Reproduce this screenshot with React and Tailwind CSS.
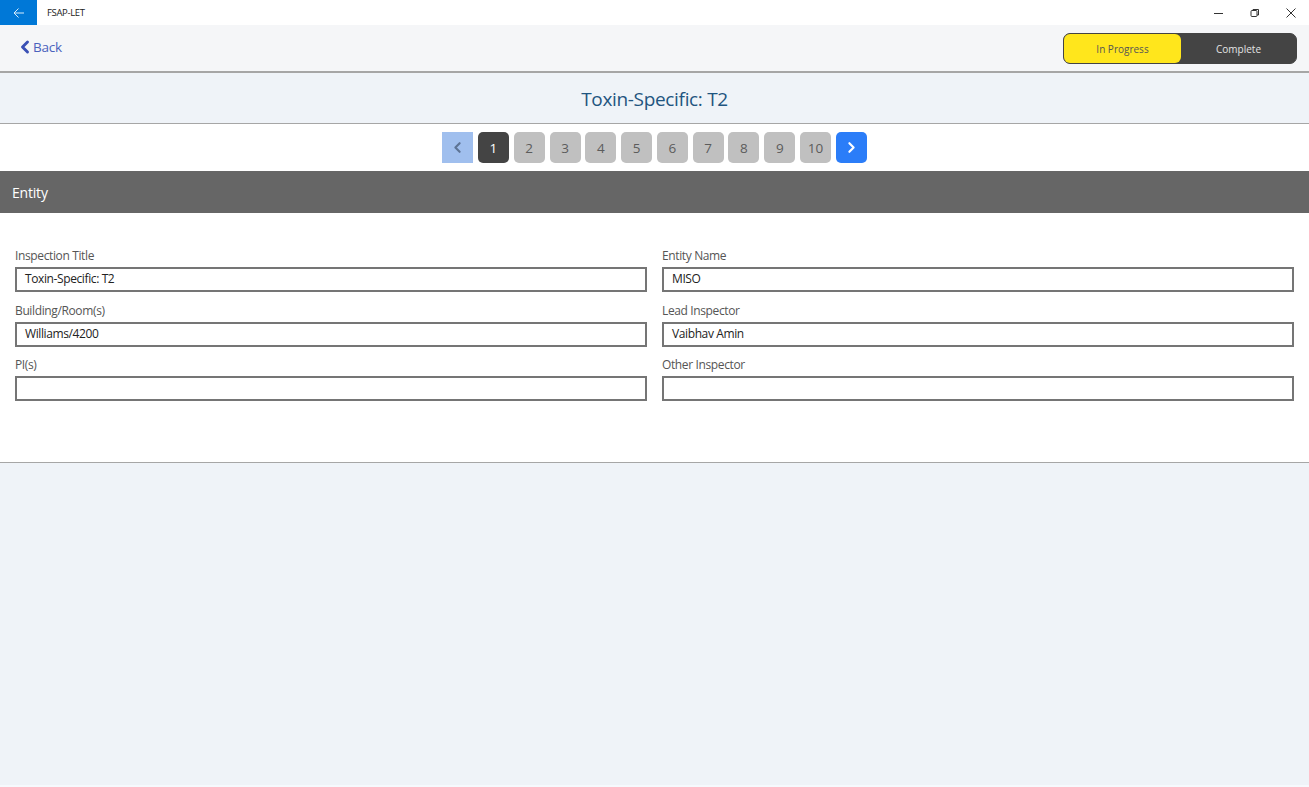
import React from "react";
import {ChevronLeft, ChevronRight} from "lucide-react";

const font = "font-['Open_Sans','Noto_Sans',sans-serif]";

const Field = ({label, value}) => {
  return (
    <div className="h-[54.5px]">
      <div className="h-[21px] pt-[1px] text-[12px] leading-[17px] tracking-[-0.37px] text-[#555]">{label}</div>
      <div className="h-[25px] border-2 border-[#757575] bg-white pl-2 text-[12px] leading-[19px] tracking-[-0.39px] text-[#222]">
        {value}
      </div>
    </div>
  );
};

const PageButton = ({children, active}) => {
  return (
    <div
      className={`w-[31px] h-[31px] pt-px rounded-[5px] flex items-center justify-center text-[13.5px] ${
        active ? "bg-[#444] text-white" : "bg-[#c0c0c0] text-[#5c5c5c]"
      }`}
    >
      {children}
    </div>
  );
};

const App = () => {
  return (
    <div className={`${font} w-[1309px] h-[787px] overflow-hidden flex flex-col bg-[#f6f9fd]`}>
      <div className="h-[25px] shrink-0 flex items-center bg-white">
        <div className="w-[37px] h-[25px] bg-[#0078d7] flex items-center justify-center">
          <svg width="12" height="12" viewBox="0 0 12 12" fill="none" stroke="#d8ecfb" strokeWidth="1">
            <path d="M11 6H1M5.5 1.5 1 6l4.5 4.5" />
          </svg>
        </div>
        <span className="ml-[10px] pt-px text-[9.5px] tracking-[-0.35px] text-[#222]">FSAP-LET</span>
        <div className="ml-auto flex items-center text-[#333]">
          <svg className="mr-[26px]" width="10" height="10" viewBox="0 0 10 10" stroke="#333" fill="none">
            <path d="M0 5.5h9" />
          </svg>
          <svg className="mr-[26px]" width="10" height="10" viewBox="0 0 10 10" stroke="#333" fill="none">
            <rect x="1" y="2.5" width="6" height="6" rx="1" />
            <path d="M3 2.5V1.5h5.5V7H7" />
          </svg>
          <svg className="mr-[13px]" width="10" height="10" viewBox="0 0 10 10" stroke="#333" fill="none">
            <path d="M.5.5l9 9M9.5.5l-9 9" />
          </svg>
        </div>
      </div>

      <div className="h-[48px] shrink-0 flex items-center justify-between bg-[#f5f6f8] border-b-2 border-[#a6a6a6]">
        <div className="ml-[15px] -mt-[2px] flex items-center text-[13.5px] tracking-[-0.25px] text-[#4a62bd]">
          <ChevronLeft size={20} strokeWidth={3.5} color="#3a50b5" className="-mr-[2px]" />
          <span>Back</span>
        </div>
        <div className="mr-[12px] w-[234px] h-[31px] flex rounded-[7px] bg-[#444] border border-[#444] text-[10px]">
          <div className="w-[117px] pt-[2px] rounded-[6px] bg-[#ffe61c] flex items-center justify-center text-[#555]">In Progress</div>
          <div className="flex-1 pt-[2px] flex items-center justify-center text-[#e4e4e4]">Complete</div>
        </div>
      </div>

      <div className="h-[51px] shrink-0 pt-[3px] flex items-center justify-center bg-[#eff3f8] border-b border-[#a6a6a6] text-[19px] tracking-[-0.33px] text-[#1f5580]">
        Toxin-Specific: T2
      </div>

      <div className="h-[47px] shrink-0 flex items-center justify-center gap-[4.8px] bg-white">
        <div className="w-[31px] h-[31px] bg-[#a0bfee] flex items-center justify-center">
          <ChevronLeft size={17} strokeWidth={3} color="#5d7495" />
        </div>
        <PageButton active>1</PageButton>
        <PageButton>2</PageButton>
        <PageButton>3</PageButton>
        <PageButton>4</PageButton>
        <PageButton>5</PageButton>
        <PageButton>6</PageButton>
        <PageButton>7</PageButton>
        <PageButton>8</PageButton>
        <PageButton>9</PageButton>
        <PageButton>10</PageButton>
        <div className="w-[31px] h-[31px] rounded-[5px] bg-[#2b7df8] flex items-center justify-center">
          <ChevronRight size={17} strokeWidth={3} color="white" />
        </div>
      </div>

      <div className="h-[42px] shrink-0 flex items-center pl-3 bg-[#666] text-[14px] tracking-[-0.2px] text-white">Entity</div>

      <div className="h-[250px] shrink-0 bg-white border-b border-[#a6a6a6] pl-[15px] pt-[33px]">
        <div className="grid grid-cols-[632px_632px] gap-x-[15px]">
          <Field label="Inspection Title" value="Toxin-Specific: T2" />
          <Field label="Entity Name" value="MISO" />
          <Field label="Building/Room(s)" value="Williams/4200" />
          <Field label="Lead Inspector" value="Vaibhav Amin" />
          <Field label="PI(s)" value="" />
          <Field label="Other Inspector" value="" />
        </div>
      </div>

      <div className="h-[322px] shrink-0 bg-[#eff3f8]" />
    </div>
  );
};

export default App;
